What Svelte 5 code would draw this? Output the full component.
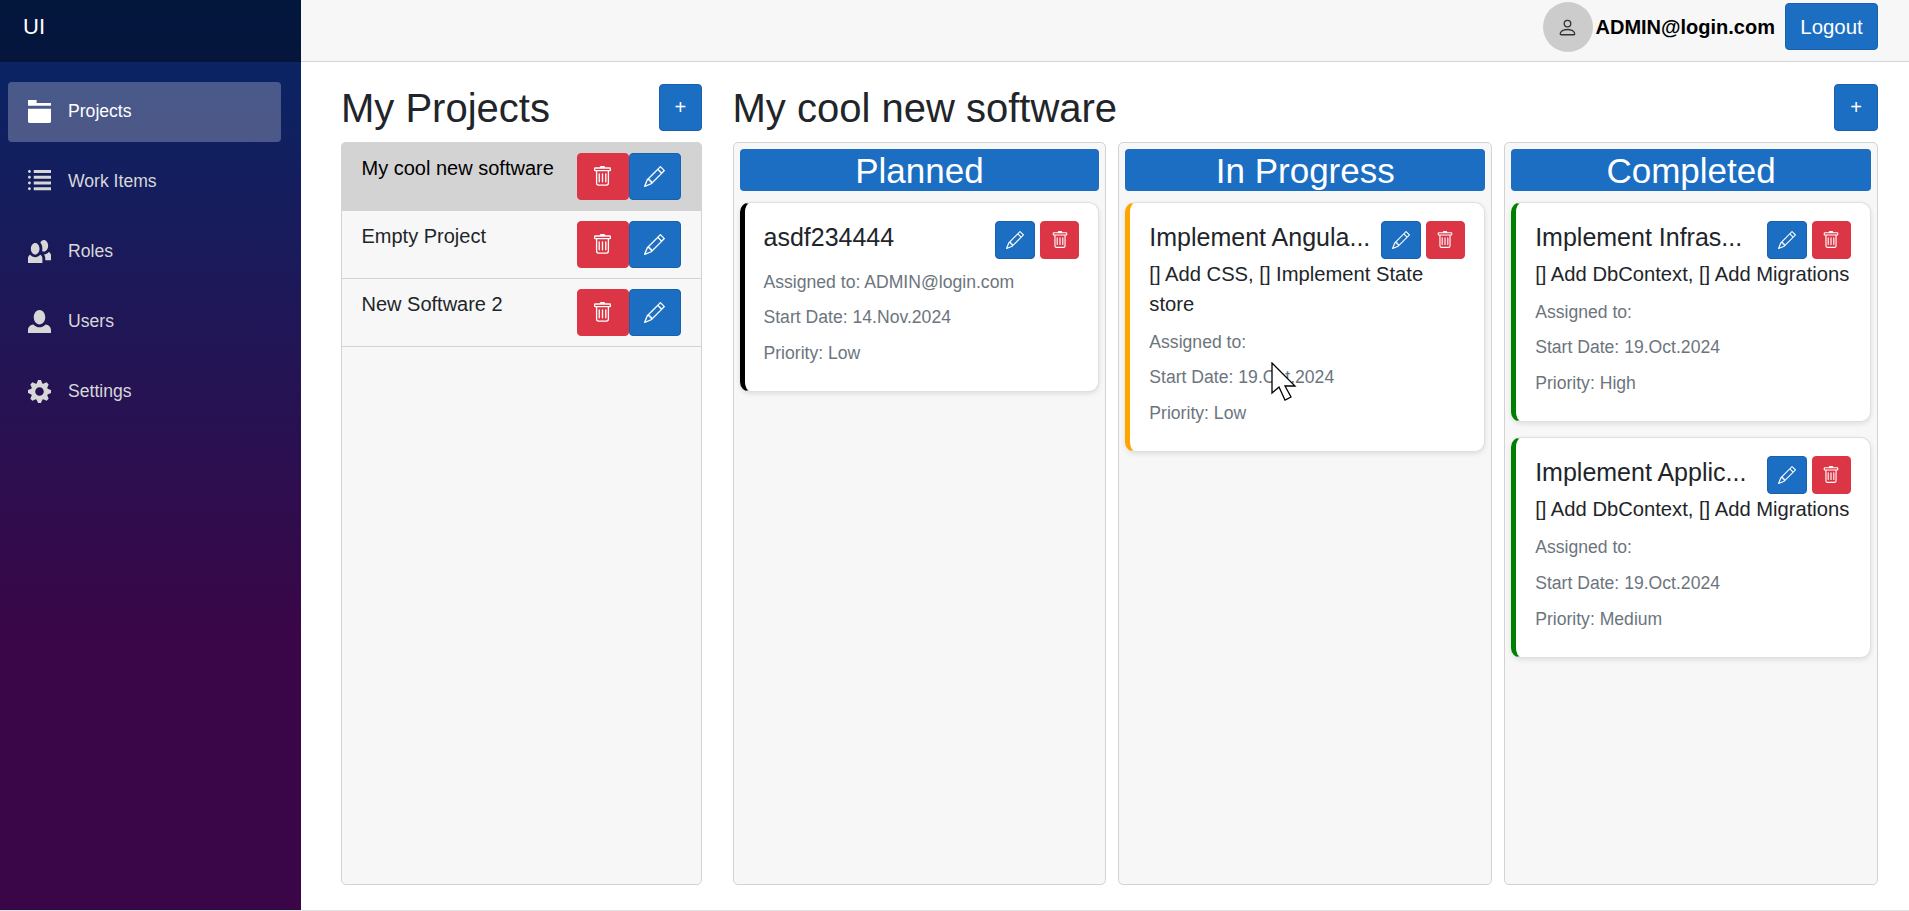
<script>
    const icons = {
        folder: "M0 0v2h8v-1h-5v-1h-3zm0 3v4.5c0 .28.22.5.5.5h7c.28 0 .5-.22.5-.5v-4.5h-8z",
        list: "M.5 0c-.28 0-.5.22-.5.5s.22.5.5.5.5-.22.5-.5-.22-.5-.5-.5zm1.5 0v1h6v-1h-6zm-1.5 2c-.28 0-.5.22-.5.5s.22.5.5.5.5-.22.5-.5-.22-.5-.5-.5zm1.5 0v1h6v-1h-6zm-1.5 2c-.28 0-.5.22-.5.5s.22.5.5.5.5-.22.5-.5-.22-.5-.5-.5zm1.5 0v1h6v-1h-6zm-1.5 2c-.28 0-.5.22-.5.5s.22.5.5.5.5-.22.5-.5-.22-.5-.5-.5zm1.5 0v1h6v-1h-6z",
        people: "M5.5 0c-.51 0-.95.35-1.22.88.45.54.72 1.28.72 2.13 0 .29-.03.55-.09.81.19.11.38.19.59.19.83 0 1.5-.9 1.5-2s-.67-2-1.5-2zm-3 1c-.83 0-1.5.9-1.5 2s.67 2 1.5 2 1.5-.9 1.5-2-.67-2-1.5-2zm4.75 3.16c-.43.51-1.02.82-1.69.84.27.38.44.84.44 1.34v.66h2v-1.66c0-.52-.31-.97-.75-1.19zm-6.5 1c-.44.22-.75.67-.75 1.19v1.66h5v-1.66c0-.52-.31-.97-.75-1.19-.45.53-1.06.84-1.75.84s-1.3-.32-1.75-.84z",
        person: "M4 0c-1.1 0-2 1.12-2 2.5s.9 2.5 2 2.5 2-1.12 2-2.5-.9-2.5-2-2.5zm-2.09 5c-1.06.05-1.91.92-1.91 2v1h8v-1c0-1.08-.84-1.95-1.91-2-.54.61-1.28 1-2.09 1-.81 0-1.55-.39-2.09-1z",
        cog: "M3.5 0l-.5 1.19c-.1.03-.19.08-.28.13l-1.19-.5-.72.72.5 1.19c-.05.1-.09.18-.13.28l-1.19.5v1l1.19.5c.04.1.08.18.13.28l-.5 1.19.72.72 1.19-.5c.09.04.18.09.28.13l.5 1.19h1l.5-1.19c.09-.04.19-.08.28-.13l1.19.5.72-.72-.5-1.19c.04-.09.09-.19.13-.28l1.19-.5v-1l-1.19-.5c-.03-.09-.08-.19-.13-.28l.5-1.19-.72-.72-1.19.5c-.09-.04-.19-.09-.28-.13l-.5-1.19h-1zm.5 2.5c.83 0 1.5.67 1.5 1.5s-.67 1.5-1.5 1.5-1.5-.67-1.5-1.5.67-1.5 1.5-1.5z"
    };

    const trash1 = "M5.5 5.5A.5.5 0 0 1 6 6v6a.5.5 0 0 1-1 0V6a.5.5 0 0 1 .5-.5m2.5 0a.5.5 0 0 1 .5.5v6a.5.5 0 0 1-1 0V6a.5.5 0 0 1 .5-.5m3 .5a.5.5 0 0 0-1 0v6a.5.5 0 0 0 1 0z";
    const trash2 = "M14.5 3a1 1 0 0 1-1 1H13v9a2 2 0 0 1-2 2H5a2 2 0 0 1-2-2V4h-.5a1 1 0 0 1-1-1V2a1 1 0 0 1 1-1H6a1 1 0 0 1 1-1h2a1 1 0 0 1 1 1h3.5a1 1 0 0 1 1 1zM4.118 4 4 4.059V13a1 1 0 0 0 1 1h6a1 1 0 0 0 1-1V4.059L11.882 4zM2.5 3h11V2h-11z";
    const pencil = "M12.146.146a.5.5 0 0 1 .708 0l3 3a.5.5 0 0 1 0 .708l-10 10a.5.5 0 0 1-.168.11l-5 2a.5.5 0 0 1-.65-.65l2-5a.5.5 0 0 1 .11-.168zM11.207 2.5 13.5 4.793 14.793 3.5 12.5 1.207zm1.586 3L10.5 3.207 4 9.707V10h.5a.5.5 0 0 1 .5.5v.5h.5a.5.5 0 0 1 .5.5v.5h.293zm-9.761 5.175-.106.106-1.528 3.821 3.821-1.528.106-.106A.5.5 0 0 1 5 12.5V12h-.5a.5.5 0 0 1-.5-.5V11h-.5a.5.5 0 0 1-.468-.325";
    const personOutline = "M8 8a3 3 0 1 0 0-6 3 3 0 0 0 0 6m2-3a2 2 0 1 1-4 0 2 2 0 0 1 4 0m4 8c0 1-1 1-1 1H3s-1 0-1-1 1-4 6-4 6 3 6 4m-1-.004c-.001-.246-.154-.986-.832-1.664C11.516 10.68 10.289 10 8 10s-3.516.68-4.168 1.332c-.678.678-.83 1.418-.832 1.664z";

    const navItems = [
        { label: "Projects", icon: "folder", active: true },
        { label: "Work Items", icon: "list" },
        { label: "Roles", icon: "people" },
        { label: "Users", icon: "person" },
        { label: "Settings", icon: "cog" }
    ];

    const projects = [
        { name: "My cool new software", selected: true },
        { name: "Empty Project" },
        { name: "New Software 2" }
    ];

    const columns = [
        { title: "Planned", cards: [
            { title: "asdf234444", assigned: "ADMIN@login.com", date: "14.Nov.2024", priority: "Low", color: "#000" }
        ]},
        { title: "In Progress", cards: [
            { title: "Implement Angula...", tasks: "[] Add CSS, [] Implement State store", assigned: "", date: "19.Oct.2024", priority: "Low", color: "orange" }
        ]},
        { title: "Completed", cards: [
            { title: "Implement Infras...", tasks: "[] Add DbContext, [] Add Migrations", assigned: "", date: "19.Oct.2024", priority: "High", color: "green" },
            { title: "Implement Applic...", tasks: "[] Add DbContext, [] Add Migrations", assigned: "", date: "19.Oct.2024", priority: "Medium", color: "green" }
        ]}
    ];
</script>

{#snippet trashIcon(size)}
    <svg width={size} height={size} viewBox="0 0 16 16" fill="currentColor"><path d={trash1}/><path d={trash2}/></svg>
{/snippet}

{#snippet pencilIcon(size)}
    <svg width={size} height={size} viewBox="0 0 16 16" fill="currentColor"><path d={pencil}/></svg>
{/snippet}

<div class="page">
    <aside class="sidebar">
        <div class="brand">UI</div>
        <nav>
            {#each navItems as item}
                <div class="nav-item" class:active={item.active}>
                    <svg width="23" height="23" viewBox="0 0 8 8" fill="currentColor"><path d={icons[item.icon]}/></svg>
                    <span>{item.label}</span>
                </div>
            {/each}
        </nav>
    </aside>

    <div class="main">
        <header class="topbar">
            <div class="avatar">
                <svg width="21" height="21" viewBox="0 0 16 16" fill="#333"><path d={personOutline}/></svg>
            </div>
            <span class="email">ADMIN@login.com</span>
            <button class="btn blue logout">Logout</button>
        </header>

        <div class="content">
            <section class="projects">
                <div class="heading">
                    <h1>My Projects</h1>
                    <button class="btn blue add">+</button>
                </div>
                <div class="panel list">
                    {#each projects as project}
                        <div class="project" class:selected={project.selected}>
                            <span class="project-name">{project.name}</span>
                            <button class="btn red wide first">{@render trashIcon(21)}</button>
                            <button class="btn blue wide">{@render pencilIcon(21)}</button>
                        </div>
                    {/each}
                </div>
            </section>

            <section class="board">
                <div class="heading">
                    <h1>My cool new software</h1>
                    <button class="btn blue add">+</button>
                </div>
                <div class="columns">
                    {#each columns as column}
                        <div class="panel column">
                            <h2>{column.title}</h2>
                            {#each column.cards as card}
                                <div class="card" style="border-left-color: {card.color}">
                                    <div class="card-top">
                                        <h3>{card.title}</h3>
                                        <button class="btn blue small">{@render pencilIcon(18)}</button>
                                        <button class="btn red small">{@render trashIcon(18)}</button>
                                    </div>
                                    {#if card.tasks}
                                        <div class="tasks">{card.tasks}</div>
                                    {/if}
                                    <div class="meta">
                                        <p>Assigned to: {card.assigned}</p>
                                        <p>Start Date: {card.date}</p>
                                        <p>Priority: {card.priority}</p>
                                    </div>
                                </div>
                            {/each}
                        </div>
                    {/each}
                </div>
            </section>
        </div>
    </div>

    <svg class="cursor" width="26" height="40" viewBox="0 0 26 40">
        <path d="M1 1V31L8 25L14 38L20 35L14 24H24Z" fill="#fff" stroke="#000" stroke-width="1.3" stroke-linejoin="miter"/>
    </svg>
</div>

<style>
:global(body){
    margin: 0;
    background: #e3e3e3;
    font-family: "Liberation Sans", Arial, sans-serif;
}
.page{
    display: flex;
    height: 910px;
    background: #fff;
    position: relative;
    overflow: hidden;
}
.sidebar{
    width: 301px;
    flex-shrink: 0;
    background-image: linear-gradient(180deg, rgb(5, 39, 103) 0%, #3a0647 70%);
}
.brand{
    height: 62px;
    box-sizing: border-box;
    padding: 13px 23px 0;
    background: rgba(0,0,0,0.4);
    color: #fff;
    font-size: 22px;
    line-height: 28px;
}
nav{
    padding-top: 20px;
}
.nav-item{
    display: flex;
    align-items: center;
    gap: 17px;
    width: 273px;
    height: 60px;
    box-sizing: border-box;
    margin: 0 0 10px 8px;
    padding: 0 0 2px 20px;
    border-radius: 4px;
    color: #d7d7d7;
    font-size: 17.6px;
}
.nav-item.active{
    background: rgba(255,255,255,0.25);
    color: #fff;
}
.main{
    flex: 1;
    min-width: 0;
}
.topbar{
    height: 62px;
    box-sizing: border-box;
    display: flex;
    align-items: flex-start;
    justify-content: flex-end;
    padding: 2px 31px 0 0;
    background: #f7f7f7;
    border-bottom: 1px solid #d6d5d5;
}
.avatar{
    width: 50px;
    height: 50px;
    border-radius: 50%;
    background: #ccc;
    display: flex;
    align-items: center;
    justify-content: center;
}
.email{
    margin: 0 10px 0 3px;
    font-weight: bold;
    font-size: 20px;
    line-height: 50px;
    color: #000;
}
.btn{
    border: 1px solid;
    padding: 0;
    color: #fff;
    font-family: inherit;
    display: flex;
    align-items: center;
    justify-content: center;
    border-radius: 4px;
}
.btn.blue{
    background: #1b6ec2;
    border-color: #1861ac;
}
.btn.red{
    background: #dc3545;
    border-color: #dc3545;
}
.logout{
    width: 93px;
    height: 47px;
    margin-top: 1px;
    padding-top: 1px;
    font-size: 20.4px;
}
.add{
    width: 43.5px;
    height: 47px;
    font-size: 20px;
    margin-top: 1px;
}
.board .add{
    width: 44px;
}
.wide{
    width: 52.5px;
    height: 47px;
    flex-shrink: 0;
}
.wide.first{
    width: 52px;
}
.small{
    width: 39.5px;
    height: 38px;
    flex-shrink: 0;
}
.content{
    display: flex;
    gap: 30.5px;
    padding: 21px 31px 0 40px;
}
.projects{
    width: 361px;
    flex-shrink: 0;
}
.board{
    flex: 1;
    min-width: 0;
}
.heading{
    display: flex;
    justify-content: space-between;
    height: 59px;
}
h1{
    margin: 0;
    font-size: 40px;
    font-weight: 400;
    line-height: 48px;
    color: #212529;
    padding-top: 1px;
}
.panel{
    height: 743px;
    box-sizing: border-box;
    background: #f7f7f7;
    border: 1px solid #d3d3d3;
    border-radius: 5px;
}
.project{
    display: flex;
    padding: 10px 20px 10px 19.5px;
    border-bottom: 1px solid #d3d3d3;
    color: #212529;
}
.project-name{
    flex: 1;
    font-size: 20px;
    line-height: 30px;
}
.project.selected{
    margin: -1px -1px 0;
    padding: 11px 21px 10px 20.5px;
    background: #d3d3d3;
    color: #000;
    border-radius: 5px 5px 0 0;
}
.columns{
    display: grid;
    grid-template-columns: repeat(3, 1fr);
    gap: 12px;
}
.column{
    padding: 6px;
    min-width: 0;
}
h2{
    margin: 0 0 10.5px;
    padding-top: 1px;
    background: #1b6ec2;
    color: #fff;
    text-align: center;
    font-size: 35px;
    font-weight: 400;
    line-height: 41px;
    border-radius: 4px;
}
.card{
    background: #fff;
    border: 1px solid #dfdfdf;
    border-left: 5px solid #000;
    border-radius: 10px;
    box-shadow: 0 2px 5px rgba(0,0,0,0.1);
    padding: 18.2px 19px 14px 19px;
    margin-bottom: 15px;
    color: #212529;
}
.card-top{
    display: flex;
    gap: 5px;
}
h3{
    flex: 1;
    margin: 0;
    font-size: 25px;
    font-weight: 400;
    line-height: 32px;
    white-space: nowrap;
}
.tasks{
    font-size: 20.2px;
    line-height: 30px;
}
.meta{
    margin-top: 11px;
    color: #6c757d;
    font-size: 17.6px;
}
.meta p{
    margin: 0 0 11.8px;
    line-height: 24px;
}
.cursor{
    position: absolute;
    left: 1271px;
    top: 362px;
}
</style>
